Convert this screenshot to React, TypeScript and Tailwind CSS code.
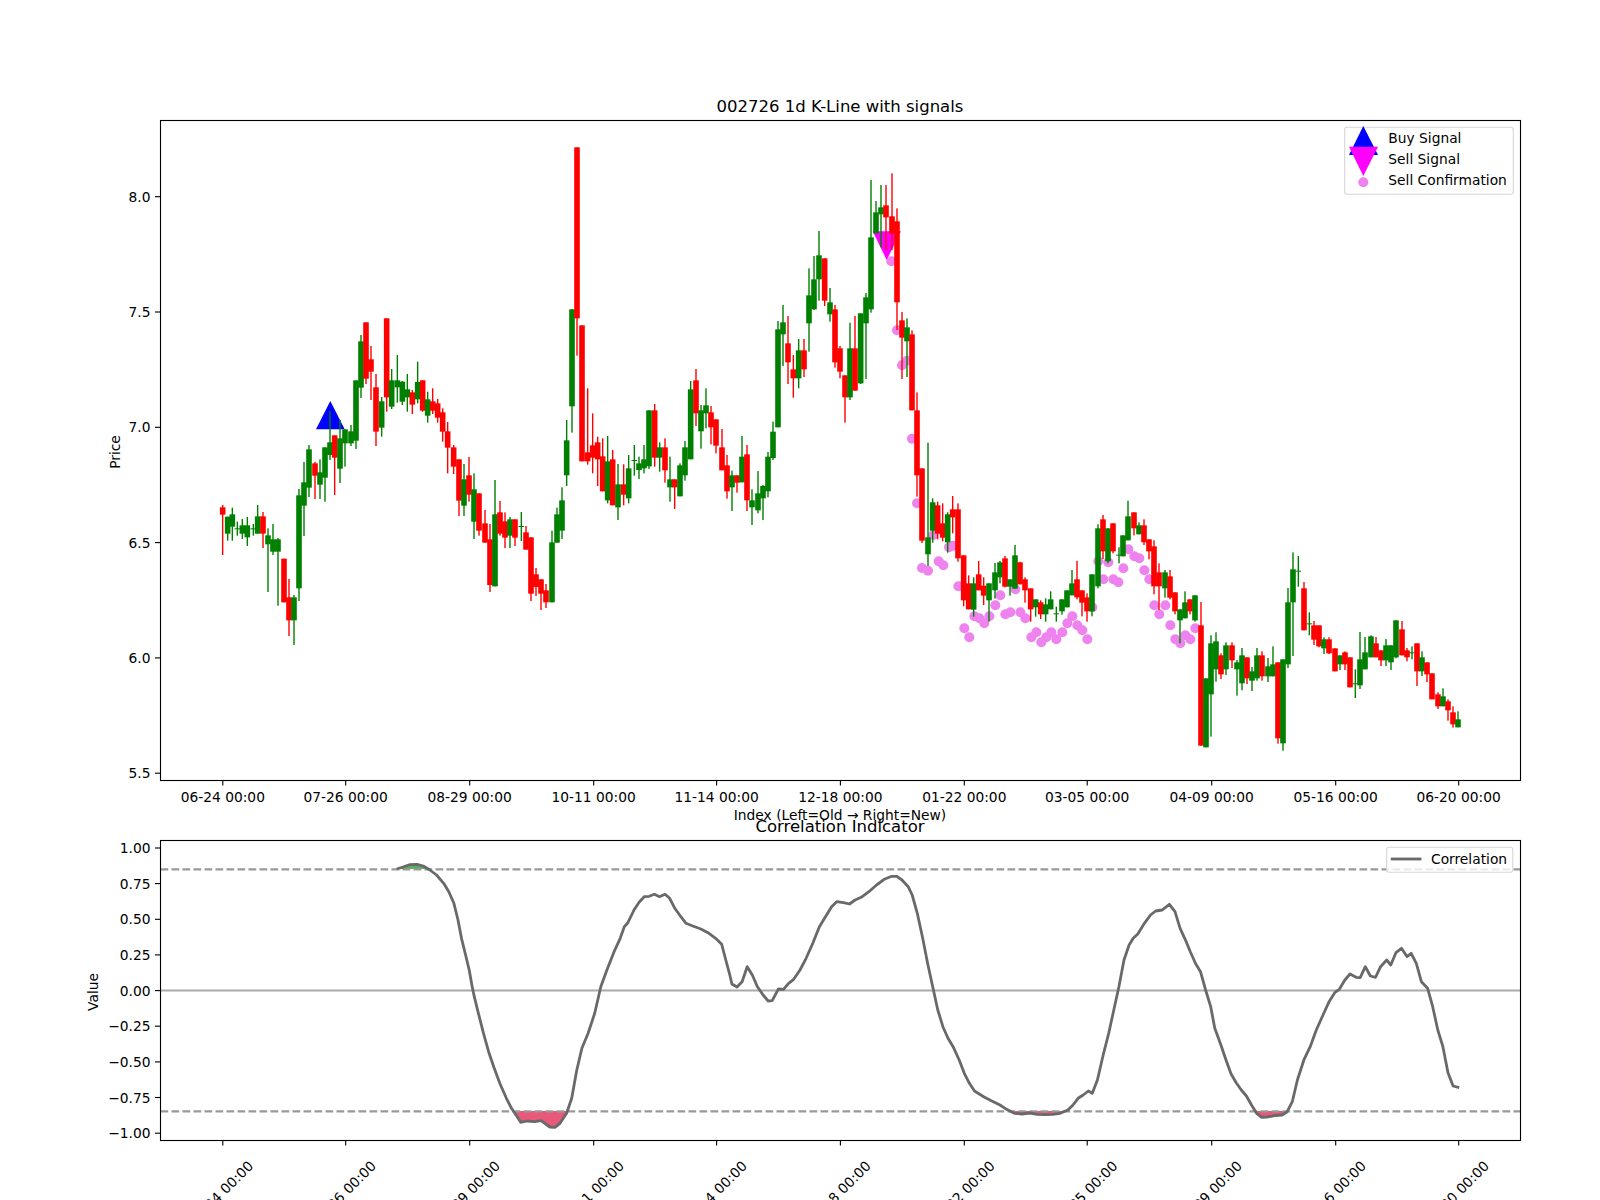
const PLOT_LEFT = 160.5;
const PLOT_RIGHT = 1520.5;

const X_TICKS: [number, string][] = [
  [222.8, "06-24 00:00"],
  [345.7, "07-26 00:00"],
  [469.7, "08-29 00:00"],
  [593.7, "10-11 00:00"],
  [716.6, "11-14 00:00"],
  [840.4, "12-18 00:00"],
  [964.3, "01-22 00:00"],
  [1087.2, "03-05 00:00"],
  [1211.7, "04-09 00:00"],
  [1335.7, "05-16 00:00"],
  [1458.7, "06-20 00:00"],
];

const PRICE_TICKS: [number, string][] = [
  [196.7, "8.0"],
  [312, "7.5"],
  [427.3, "7.0"],
  [542.6, "6.5"],
  [657.9, "6.0"],
  [773.2, "5.5"],
];

const VALUE_TICKS: [number, string][] = [
  [848, "1.00"],
  [883.6, "0.75"],
  [919.3, "0.50"],
  [954.9, "0.25"],
  [990.6, "0.00"],
  [1026.2, "\u22120.25"],
  [1061.9, "\u22120.50"],
  [1097.5, "\u22120.75"],
  [1133.2, "\u22121.00"],
];

// [x, red?, wick top, body top, body bottom, wick bottom], traced at 3x, so each block has its own origin
type Row = [number, number, number, number, number, number];

const BLOCK_A: Row[] = [
  [68, 1, 315, 322, 344, 465], [83, 0, 350, 350, 401, 422], [97, 0, 323, 343, 380, 422],
  [112, 0, 365, 385, 388, 407], [127, 0, 357, 376, 401, 417], [142, 0, 351, 376, 412, 438],
  [160, 0, 372, 385, 388, 407], [173, 0, 315, 349, 401, 401], [189, 1, 336, 349, 401, 444],
  [204, 0, 385, 406, 433, 576], [219, 0, 372, 418, 455, 465], [234, 0, 414, 418, 455, 617],
  [252, 1, 476, 476, 607, 607], [267, 1, 537, 592, 661, 708], [282, 0, 585, 592, 661, 735],
  [297, 0, 267, 286, 565, 603], [312, 0, 186, 247, 317, 408], [327, 0, 135, 148, 263, 291],
  [345, 1, 186, 190, 227, 297], [360, 0, 178, 217, 254, 297], [375, 0, 142, 142, 233, 305],
  [390, 0, 33, 127, 165, 180], [404, 1, 106, 106, 173, 285], [420, 0, 60, 115, 206, 249],
  [435, 0, 88, 88, 130, 200], [453, 0, 75, 94, 130, 138], [468, 0, -59, -59, 122, 147],
  [483, 0, -195, -176, -37, -6], [498, 1, -233, -233, -64, -48], [513, 1, -162, -122, -85, 0],
  [528, 1, -78, -38, 95, 138], [545, 0, -9, 4, 83, 110], [560, 1, -245, -245, -8, 35],
  [575, 0, -93, -59, 20, 27], [592, 0, -135, -59, -38, 8], [607, 0, -57, -55, 5, 15],
  [622, 0, -78, -32, -8, 35], [637, 1, -30, -23, 14, 42], [653, 0, -115, -54, -2, 10],
  [668, 1, -59, -59, 32, 35], [683, 0, -25, -2, 47, 68], [698, 1, -35, 4, 32, 42],
  [713, 1, -3, 10, 53, 68], [728, 1, 25, 37, 95, 125], [743, 1, 66, 94, 143, 220],
  [761, 1, 135, 142, 200, 222], [777, 1, 178, 178, 302, 348], [792, 0, 192, 238, 317, 348],
  [807, 1, 171, 226, 284, 305], [822, 0, 220, 268, 365, 417], [837, 1, 280, 280, 392, 407],
  [855, 1, 330, 370, 428, 428], [870, 1, 372, 418, 555, 576], [885, 0, 240, 343, 559, 559],
  [900, 1, 303, 337, 401, 407], [915, 1, 337, 364, 413, 444], [930, 0, 351, 358, 407, 444],
  [945, 1, 358, 358, 413, 438], [964, 0, 336, 378, 381, 423], [978, 1, 378, 397, 449, 449],
  [993, 1, 412, 412, 581, 603], [1008, 1, 504, 523, 561, 588], [1023, 1, 538, 538, 581, 630],
  [1038, 1, 552, 571, 607, 624], [1056, 0, 392, 427, 607, 607], [1071, 0, 323, 343, 428, 428],
  [1086, 0, 262, 301, 392, 417],
];

const BLOCK_B: Row[] = [
  [50, 0, 870, 931, 1036, 1068], [66, 0, 538, 538, 829, 908], [81, 1, 52, 52, 565, 677],
  [96, 1, 586, 586, 994, 994], [113, 1, 775, 967, 994, 1004], [128, 1, 850, 946, 983, 1030],
  [143, 1, 920, 937, 988, 1068], [158, 1, 925, 979, 1084, 1084], [173, 0, 918, 994, 1111, 1120],
  [188, 1, 960, 988, 1126, 1126], [204, 0, 1002, 1063, 1132, 1170], [221, 1, 1003, 1063, 1094, 1126],
  [236, 0, 975, 1015, 1105, 1120], [253, 0, 945, 990, 993, 1037], [267, 0, 980, 1000, 1020, 1047],
  [282, 0, 945, 988, 1015, 1030], [297, 0, 841, 841, 1009, 1017], [314, 1, 822, 841, 983, 1010],
  [329, 0, 937, 952, 983, 1025], [345, 1, 925, 952, 1021, 1058], [360, 0, 980, 1048, 1072, 1115],
  [374, 1, 1048, 1048, 1072, 1137], [390, 0, 1000, 1006, 1099, 1099], [405, 0, 933, 952, 1036, 1052],
  [422, 0, 753, 778, 988, 988], [438, 1, 717, 751, 850, 888], [453, 0, 825, 841, 904, 956],
  [468, 0, 775, 826, 850, 895], [483, 1, 828, 847, 892, 943], [498, 1, 868, 868, 947, 970],
  [516, 1, 897, 952, 1021, 1021], [531, 1, 975, 1006, 1084, 1106], [546, 0, 1022, 1036, 1072, 1143],
  [561, 1, 1036, 1036, 1058, 1088], [576, 0, 918, 980, 1057, 1057], [591, 1, 945, 973, 1111, 1143],
  [606, 0, 1078, 1111, 1132, 1185], [624, 0, 1023, 1090, 1141, 1150], [639, 0, 1065, 1068, 1105, 1170],
  [654, 0, 966, 980, 1084, 1102], [669, 0, 875, 905, 984, 990], [684, 0, 573, 598, 892, 892],
  [699, 0, 525, 577, 613, 708], [714, 1, 558, 640, 697, 762], [730, 1, 675, 718, 745, 803],
  [746, 0, 627, 661, 745, 775], [762, 1, 627, 661, 718, 741], [777, 0, 415, 496, 580, 665],
  [792, 0, 378, 448, 538, 540], [807, 0, 303, 376, 448, 512], [824, 1, 385, 385, 512, 528],
  [840, 0, 474, 517, 553, 575], [855, 1, 525, 538, 697, 713], [870, 1, 648, 655, 725, 745],
  [885, 1, 736, 736, 802, 878], [900, 0, 578, 655, 802, 810], [915, 1, 558, 655, 782, 782],
  [932, 0, 550, 550, 760, 762], [948, 0, 489, 502, 580, 747], [963, 0, 150, 322, 538, 548],
  [978, 0, 213, 247, 310, 310], [993, 0, 165, 232, 253, 352], [1008, 1, 165, 226, 262, 360],
  [1026, 1, 130, 259, 310, 360], [1041, 1, 235, 274, 517, 600], [1056, 1, 546, 571, 623, 747],
  [1071, 0, 565, 592, 634, 741], [1086, 1, 601, 613, 841, 841], [1101, 1, 787, 841, 1036, 1100],
];

const BLOCK_C: Row[] = [
  [66, 1, -35, -35, 182, 189], [84, 0, -112, 172, 223, 258], [98, 0, 55, 67, 152, 188],
  [113, 1, 65, 76, 161, 178], [128, 1, 70, 130, 173, 184], [143, 0, 97, 103, 187, 218],
  [158, 1, 48, 88, 112, 160], [174, 1, 70, 88, 235, 245], [191, 1, 226, 226, 361, 379],
  [206, 1, 286, 310, 388, 388], [221, 0, 292, 310, 389, 410], [236, 1, 243, 283, 331, 331],
  [251, 1, 292, 317, 347, 375], [267, 0, 310, 310, 361, 425], [285, 0, 249, 277, 331, 356],
  [300, 0, 243, 247, 292, 310], [315, 1, 228, 235, 320, 322], [330, 0, 298, 298, 320, 347],
  [345, 0, 195, 226, 326, 326], [360, 1, 245, 247, 313, 313], [375, 1, 292, 298, 331, 368],
  [392, 1, 325, 325, 388, 425], [407, 0, 358, 358, 382, 410], [422, 1, 361, 367, 403, 417],
  [437, 0, 355, 373, 403, 425], [452, 0, 334, 358, 388, 388], [469, 0, 380, 400, 403, 425],
  [486, 0, 358, 358, 394, 404], [501, 0, 331, 331, 382, 382], [516, 0, 270, 310, 346, 346],
  [531, 1, 243, 298, 352, 358], [546, 1, 331, 331, 368, 409], [561, 1, 340, 352, 394, 425],
  [576, 0, 283, 283, 394, 409], [594, 0, 133, 145, 319, 325], [609, 1, 105, 118, 214, 237],
  [624, 0, 145, 145, 244, 250], [639, 1, 130, 130, 214, 220], [657, 0, 202, 224, 227, 250],
  [669, 0, 166, 166, 229, 229], [684, 0, 62, 109, 181, 181], [702, 1, 97, 97, 145, 166],
  [717, 0, 127, 136, 163, 163], [732, 1, 118, 136, 187, 195], [747, 1, 178, 178, 214, 238],
  [762, 1, 181, 199, 319, 343], [777, 1, 250, 277, 319, 390], [795, 0, 270, 277, 325, 353],
  [810, 1, 270, 289, 353, 358], [825, 1, 337, 337, 394, 403], [840, 0, 388, 388, 421, 490],
  [855, 0, 334, 367, 415, 415], [870, 1, 358, 358, 394, 403], [885, 0, 346, 346, 421, 425],
];

const BLOCK_D: Row[] = [
  [153, 1, 216, 286, 647, 647], [168, 0, 445, 445, 652, 652], [183, 0, 316, 340, 493, 620],
  [198, 0, 307, 334, 418, 455], [213, 1, 370, 376, 433, 447], [228, 0, 337, 346, 418, 435],
  [246, 1, 337, 346, 391, 414], [261, 0, 390, 397, 418, 497], [276, 0, 354, 376, 460, 481],
  [291, 1, 382, 382, 445, 462], [306, 0, 411, 424, 452, 483], [321, 0, 354, 376, 445, 452],
  [336, 1, 364, 376, 439, 452], [354, 0, 384, 409, 439, 456], [369, 0, 349, 403, 439, 439],
  [384, 1, 397, 397, 625, 641], [399, 0, 388, 388, 640, 662], [414, 0, 174, 217, 403, 414],
  [429, 0, 67, 118, 217, 378], [445, 0, 78, 122, 125, 170], [462, 1, 156, 175, 301, 301],
  [478, 0, 247, 280, 283, 316], [492, 1, 273, 286, 329, 345], [507, 1, 286, 286, 349, 352],
  [522, 0, 322, 328, 355, 372], [537, 1, 322, 328, 370, 372], [555, 1, 355, 355, 424, 424],
  [570, 0, 376, 376, 403, 420], [585, 1, 364, 367, 403, 420], [600, 1, 382, 382, 472, 472],
  [616, 0, 418, 460, 463, 504], [630, 0, 306, 388, 466, 477], [645, 0, 321, 367, 418, 418],
  [663, 0, 316, 319, 382, 382], [678, 1, 321, 340, 382, 382], [693, 1, 361, 361, 391, 408],
  [708, 0, 327, 346, 391, 408], [723, 0, 346, 346, 397, 420], [738, 0, 271, 271, 382, 385],
  [756, 1, 273, 298, 376, 376], [771, 1, 354, 361, 382, 394], [786, 0, 349, 367, 370, 388],
  [801, 1, 340, 340, 424, 468], [816, 0, 364, 382, 424, 438], [831, 1, 397, 397, 433, 456],
  [846, 1, 430, 430, 508, 508], [864, 1, 487, 493, 529, 537], [879, 0, 475, 499, 529, 529],
  [894, 1, 508, 514, 541, 572], [909, 1, 529, 547, 583, 593], [924, 0, 544, 568, 592, 592],
];

const BLOCKS: [number, number, Row[]][] = [
  [200, 400, BLOCK_A],
  [550, 130, BLOCK_B],
  [900, 480, BLOCK_C],
  [1150, 530, BLOCK_D],
];

// same 3x tracing, origin 900,480
const CONFIRM_DOTS: [number, number][] = [
  [-26, -656], [-9, -449], [6, -344], [21, -358], [36, -124], [51, 70], [66, 264], [84, 272], [100, 165],
  [116, 244], [130, 256], [147, 202], [160, 197], [175, 319], [193, 445], [208, 472], [223, 409], [238, 415],
  [253, 430], [268, 409], [286, 376], [301, 346], [316, 403], [331, 397], [346, 328], [361, 397], [376, 415],
  [394, 472], [409, 457], [424, 487], [439, 472], [454, 457], [469, 478], [487, 457], [502, 430], [517, 409],
  [532, 436], [547, 451], [562, 478], [577, 382], [595, 244], [610, 298], [625, 247], [640, 298], [655, 307],
  [670, 265], [685, 208], [703, 229], [718, 235], [733, 271], [748, 298], [763, 376], [778, 403], [796, 376],
  [811, 436], [826, 478], [841, 490], [856, 466], [871, 478], [886, 445],
];

// correlation curve in page pixels: x is (zoom x / 1.96), y is (zoom y / 3)
const CURVE_A = [
  [660, 297], [672, 291], [685, 284], [700, 283], [712, 288], [725, 300], [738, 315], [752, 340], [762, 365],
  [772, 400], [780, 450], [787, 505], [795, 555], [802, 600], [808, 650], [812, 680], [820, 730], [830, 790],
  [840, 845], [850, 890], [862, 940], [875, 985], [885, 1015], [895, 1038], [903, 1057], [915, 1053], [930, 1055],
  [943, 1052], [952, 1062], [960, 1071], [970, 1072], [980, 1060], [993, 1030], [1003, 985], [1013, 900], [1023, 835],
  [1035, 790], [1048, 730], [1060, 650], [1072, 600], [1086, 545], [1098, 505], [1106, 470], [1113, 458], [1125, 420],
  [1135, 397], [1145, 380], [1155, 379], [1165, 373], [1175, 380], [1186, 373], [1195, 385], [1205, 415], [1217, 440],
  [1227, 460], [1240, 468], [1255, 476], [1270, 488], [1285, 505], [1297, 523], [1305, 570], [1312, 610], [1317, 642],
  [1327, 651], [1337, 635], [1347, 590], [1357, 615], [1367, 650], [1378, 675], [1388, 693], [1396, 692], [1408, 657],
  [1418, 658], [1428, 640], [1438, 628],
];
const CURVE_B = [
  [0, 600], [12, 565], [25, 520], [38, 470], [50, 440], [62, 410], [72, 395], [85, 398], [97, 402], [108, 390],
  [120, 382], [135, 365], [150, 345], [165, 328], [180, 319], [190, 319], [200, 330], [212, 350], [220, 375], [230, 430],
  [240, 500], [250, 580], [260, 650], [270, 720], [280, 770], [290, 805], [300, 830], [312, 870], [322, 910], [332, 940],
  [342, 963], [360, 980], [375, 992], [392, 1005], [405, 1018], [420, 1030], [435, 1032], [450, 1029], [465, 1033],
  [480, 1034], [495, 1033], [510, 1030], [525, 1020], [535, 1005], [545, 985], [555, 975], [565, 963], [573, 970],
  [583, 930], [595, 850], [605, 790], [615, 720], [625, 650], [635, 570], [645, 525], [653, 505], [662, 492], [675, 460],
  [687, 435], [697, 423], [710, 420], [724, 403], [735, 425], [745, 475], [757, 515], [765, 545], [775, 580], [785, 605],
  [795, 660], [805, 710], [813, 775], [825, 825], [835, 870], [845, 912], [855, 938], [865, 960], [875, 978], [885, 1005],
  [895, 1030], [905, 1042], [915, 1041], [930, 1037], [945, 1035], [955, 1025], [965, 995], [975, 930], [988, 868],
  [1000, 830], [1012, 780], [1025, 735], [1037, 695], [1048, 668], [1057, 658], [1068, 630], [1078, 612], [1090, 622],
  [1098, 623], [1108, 590], [1118, 618], [1128, 622], [1138, 590], [1150, 570], [1158, 585], [1168, 548], [1179, 535],
  [1190, 560], [1198, 550], [1208, 580], [1218, 635], [1230, 655], [1240, 710], [1250, 780], [1260, 830], [1270, 908],
  [1280, 948], [1292, 953],
];
const curvePoints = [
  ...CURVE_A.map(([x, y]) => [60 + x / 1.96, 770 + y / 3]),
  ...CURVE_B.map(([x, y]) => [800 + x / 1.96, 770 + y / 3]),
]
  .map(([x, y]) => `${x.toFixed(1)},${y.toFixed(1)}`)
  .join(" ");

function Candles() {
  return (
    <g>
      {BLOCKS.flatMap(([ox, oy, rows]) =>
        rows.map(([x, red, wickTop, bodyTop, bodyBottom, wickBottom]) => {
          const cx = ox + x / 3;
          const color = red ? "#ff0000" : "#008000";
          return (
            <g key={`${ox}-${x}`} fill={color}>
              <rect x={cx - 0.7} y={oy + wickTop / 3} width={1.4} height={(wickBottom - wickTop) / 3} />
              <rect x={cx - 2.8} y={oy + bodyTop / 3} width={5.6} height={(bodyBottom - bodyTop) / 3} />
            </g>
          );
        })
      )}
    </g>
  );
}

function Frame({ top, bottom }: { top: number; bottom: number }) {
  return (
    <rect
      x={PLOT_LEFT}
      y={top}
      width={PLOT_RIGHT - PLOT_LEFT}
      height={bottom - top}
      fill="none"
      stroke="#000"
      strokeWidth={1.11}
    />
  );
}

function YTicks({ ticks }: { ticks: [number, string][] }) {
  return (
    <g>
      {ticks.map(([y, label]) => (
        <g key={label}>
          <line x1={155} x2={PLOT_LEFT} y1={y} y2={y} stroke="#000" strokeWidth={1.11} />
          <text x={150.5} y={y + 5} textAnchor="end">
            {label}
          </text>
        </g>
      ))}
    </g>
  );
}

function PriceChart() {
  return (
    <svg viewBox="0 90 1600 750" className="block h-[750px] w-[1600px] overflow-visible text-[13.8px]">
      <text x={840} y={112} textAnchor="middle" fontSize={16.5}>
        002726 1d K-Line with signals
      </text>

      {CONFIRM_DOTS.map(([x, y]) => (
        <circle key={`${x}-${y}`} cx={900 + x / 3} cy={480 + y / 3} r={5} fill="#ee82ee" />
      ))}
      <polygon points="316,429.3 344.7,429.3 330.3,401" fill="#0000ff" />
      <polygon points="872.7,231.3 901,231.3 886.7,260" fill="#ff00ff" />
      <Candles />

      <Frame top={120.5} bottom={780.5} />
      <YTicks ticks={PRICE_TICKS} />
      {X_TICKS.map(([x, label]) => (
        <g key={label}>
          <line x1={x} x2={x} y1={780} y2={785.5} stroke="#000" strokeWidth={1.11} />
          <text x={x} y={802} textAnchor="middle">
            {label}
          </text>
        </g>
      ))}
      <text x={840} y={820} textAnchor="middle">
        Index (Left=Old → Right=New)
      </text>
      <text transform="translate(120 452) rotate(-90)" textAnchor="middle">
        Price
      </text>

      {/* legend */}
      <rect x={1344.7} y={127.3} width={168.6} height={67} rx={2.5} fill="#fff" fillOpacity={0.8} stroke="#d6d6d6" strokeWidth={1.11} />
      <polygon points="1349,155 1378,155 1363.3,126" fill="#0000ff" />
      <polygon points="1349,146.7 1378,146.7 1363.3,176" fill="#ff00ff" />
      <circle cx={1363.3} cy={182.3} r={5} fill="#ee82ee" />
      <text x={1388.3} y={143}>Buy Signal</text>
      <text x={1388.3} y={164}>Sell Signal</text>
      <text x={1388.3} y={185}>Sell Confirmation</text>
    </svg>
  );
}

function CorrelationChart() {
  return (
    <svg viewBox="0 840 1600 360" className="block h-[360px] w-[1600px] overflow-visible text-[13.8px]">
      <defs>
        <clipPath id="aboveUpper">
          <rect x={PLOT_LEFT} y={840} width={1360} height={29} />
        </clipPath>
        <clipPath id="belowLower">
          <rect x={PLOT_LEFT} y={1111} width={1360} height={29} />
        </clipPath>
      </defs>

      <text x={840} y={832} textAnchor="middle" fontSize={16.5}>
        Correlation Indicator
      </text>

      <polygon points={curvePoints} fill="#5cb25c" clipPath="url(#aboveUpper)" />
      <polygon points={curvePoints} fill="#e8587a" clipPath="url(#belowLower)" />
      <line x1={PLOT_LEFT} x2={PLOT_RIGHT} y1={990.5} y2={990.5} stroke="#aaaaaa" strokeWidth={2.1} />
      <line x1={PLOT_LEFT} x2={PLOT_RIGHT} y1={869.4} y2={869.4} stroke="#999999" strokeWidth={2.1} strokeDasharray="7.7 3.3" />
      <line x1={PLOT_LEFT} x2={PLOT_RIGHT} y1={1111.4} y2={1111.4} stroke="#999999" strokeWidth={2.1} strokeDasharray="7.7 3.3" />
      <polyline points={curvePoints} fill="none" stroke="#696969" strokeWidth={2.8} strokeLinejoin="round" />

      <Frame top={840.5} bottom={1140.5} />
      <YTicks ticks={VALUE_TICKS} />
      {X_TICKS.map(([x, label]) => (
        <g key={label}>
          <line x1={x} x2={x} y1={1140} y2={1145.5} stroke="#000" strokeWidth={1.11} />
          <text transform={`translate(${x - 2} 1193) rotate(-45)`} textAnchor="middle" dominantBaseline="central">
            {label}
          </text>
        </g>
      ))}
      <text transform="translate(98 992) rotate(-90)" textAnchor="middle">
        Value
      </text>

      {/* legend */}
      <rect x={1386.7} y={847.3} width={126.1} height={25} rx={2.5} fill="#fff" fillOpacity={0.8} stroke="#d6d6d6" strokeWidth={1.11} />
      <line x1={1390.8} x2={1421.4} y1={859} y2={859} stroke="#696969" strokeWidth={2.8} />
      <text x={1431} y={864}>Correlation</text>
    </svg>
  );
}

export default function App() {
  return (
    <div className="h-[1200px] w-[1600px] overflow-hidden bg-white pt-[90px] font-['DejaVu_Sans',sans-serif] text-black">
      <PriceChart />
      <CorrelationChart />
    </div>
  );
}
